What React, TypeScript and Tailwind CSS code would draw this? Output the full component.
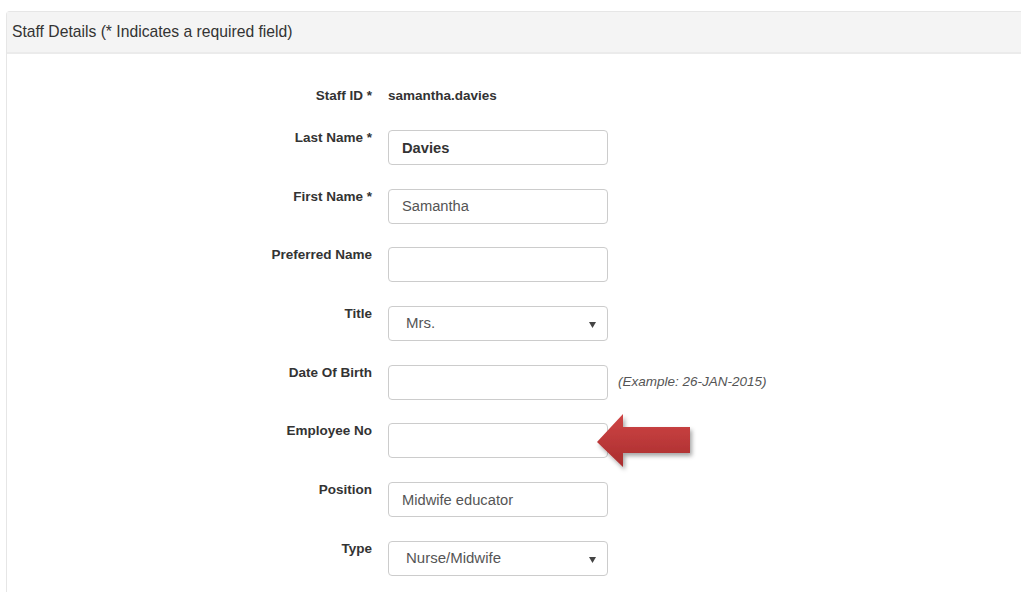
import type { ReactNode } from 'react';

type Field = {
  label: string;
  kind: 'text' | 'select';
  value?: string;
  bold?: boolean;
  hint?: string;
};

const fields: Field[] = [
  { label: 'Last Name *', kind: 'text', value: 'Davies', bold: true },
  { label: 'First Name *', kind: 'text', value: 'Samantha' },
  { label: 'Preferred Name', kind: 'text' },
  { label: 'Title', kind: 'select', value: 'Mrs.' },
  { label: 'Date Of Birth', kind: 'text', hint: '(Example: 26-JAN-2015)' },
  { label: 'Employee No', kind: 'text' },
  { label: 'Position', kind: 'text', value: 'Midwife educator' },
  { label: 'Type', kind: 'select', value: 'Nurse/Midwife' },
];

function Row({ label, children }: { label: string; children: ReactNode }) {
  return (
    <div className="flex items-start gap-4">
      <label className="w-[365px] shrink-0 text-right font-bold leading-4 text-[#333]">{label}</label>
      {children}
    </div>
  );
}

function Caret() {
  return (
    <svg width="7" height="6" viewBox="0 0 7 6" className="absolute right-[11px] top-[15px]">
      <path d="M0 0h7L3.5 6z" fill="#444" />
    </svg>
  );
}

function Control({ field }: { field: Field }) {
  if (field.kind === 'select') {
    return (
      <div className="relative flex h-[35px] w-[220px] items-center rounded border border-[#ccc] bg-white pl-[17px] text-[15px] text-[#555]">
        {field.value}
        <Caret />
      </div>
    );
  }
  return (
    <div className="flex items-center gap-[10px]">
      <input
        readOnly
        defaultValue={field.value ?? ''}
        className={`h-[35px] w-[220px] rounded border border-[#ccc] bg-white px-[13px] text-[14.7px] outline-none ${
          field.bold ? 'font-bold text-[#333]' : 'text-[#555]'
        }`}
      />
      {field.hint && <span className="text-[13.5px] italic text-[#555]">{field.hint}</span>}
    </div>
  );
}

function PointerArrow() {
  return (
    <svg width="110" height="70" viewBox="0 0 110 70" className="absolute left-[587px] top-[398px]">
      <defs>
        <linearGradient id="arrowFill" x1="0" y1="0" x2="0" y2="1">
          <stop offset="0" stopColor="#cf4545" />
          <stop offset="1" stopColor="#a92d2e" />
        </linearGradient>
        <filter id="arrowShadow" x="-20%" y="-20%" width="150%" height="160%">
          <feDropShadow dx="2" dy="3" stdDeviation="2.2" floodColor="#000" floodOpacity="0.35" />
        </filter>
      </defs>
      <path
        d="M3 32 L29 4 L29 17 L96 17 L96 43 L29 43 L29 57 Z"
        fill="url(#arrowFill)"
        filter="url(#arrowShadow)"
      />
    </svg>
  );
}

export default function App() {
  return (
    <div className="min-h-[592px] bg-white pl-[6px] pt-[11px] font-['Liberation_Sans',Arial,sans-serif] text-[13.5px]">
      <div className="relative min-h-[600px] rounded-tl border-l border-t border-[#e6e6e6]">
        <div className="flex h-[42px] items-center border-b-2 border-[#ebebeb] bg-[#f4f4f4] pl-[5px] text-[15.7px] text-[#333]">
          Staff Details (* Indicates a required field)
        </div>
        <div className="flex flex-col gap-[26px] pt-[34px]">
          <Row label="Staff ID *">
            <span className="font-bold leading-4 text-[#333]">samantha.davies</span>
          </Row>
          <div className="flex flex-col gap-[23.7px]">
            {fields.map((f) => (
              <Row key={f.label} label={f.label}>
                <Control field={f} />
              </Row>
            ))}
          </div>
        </div>
        <PointerArrow />
      </div>
    </div>
  );
}
